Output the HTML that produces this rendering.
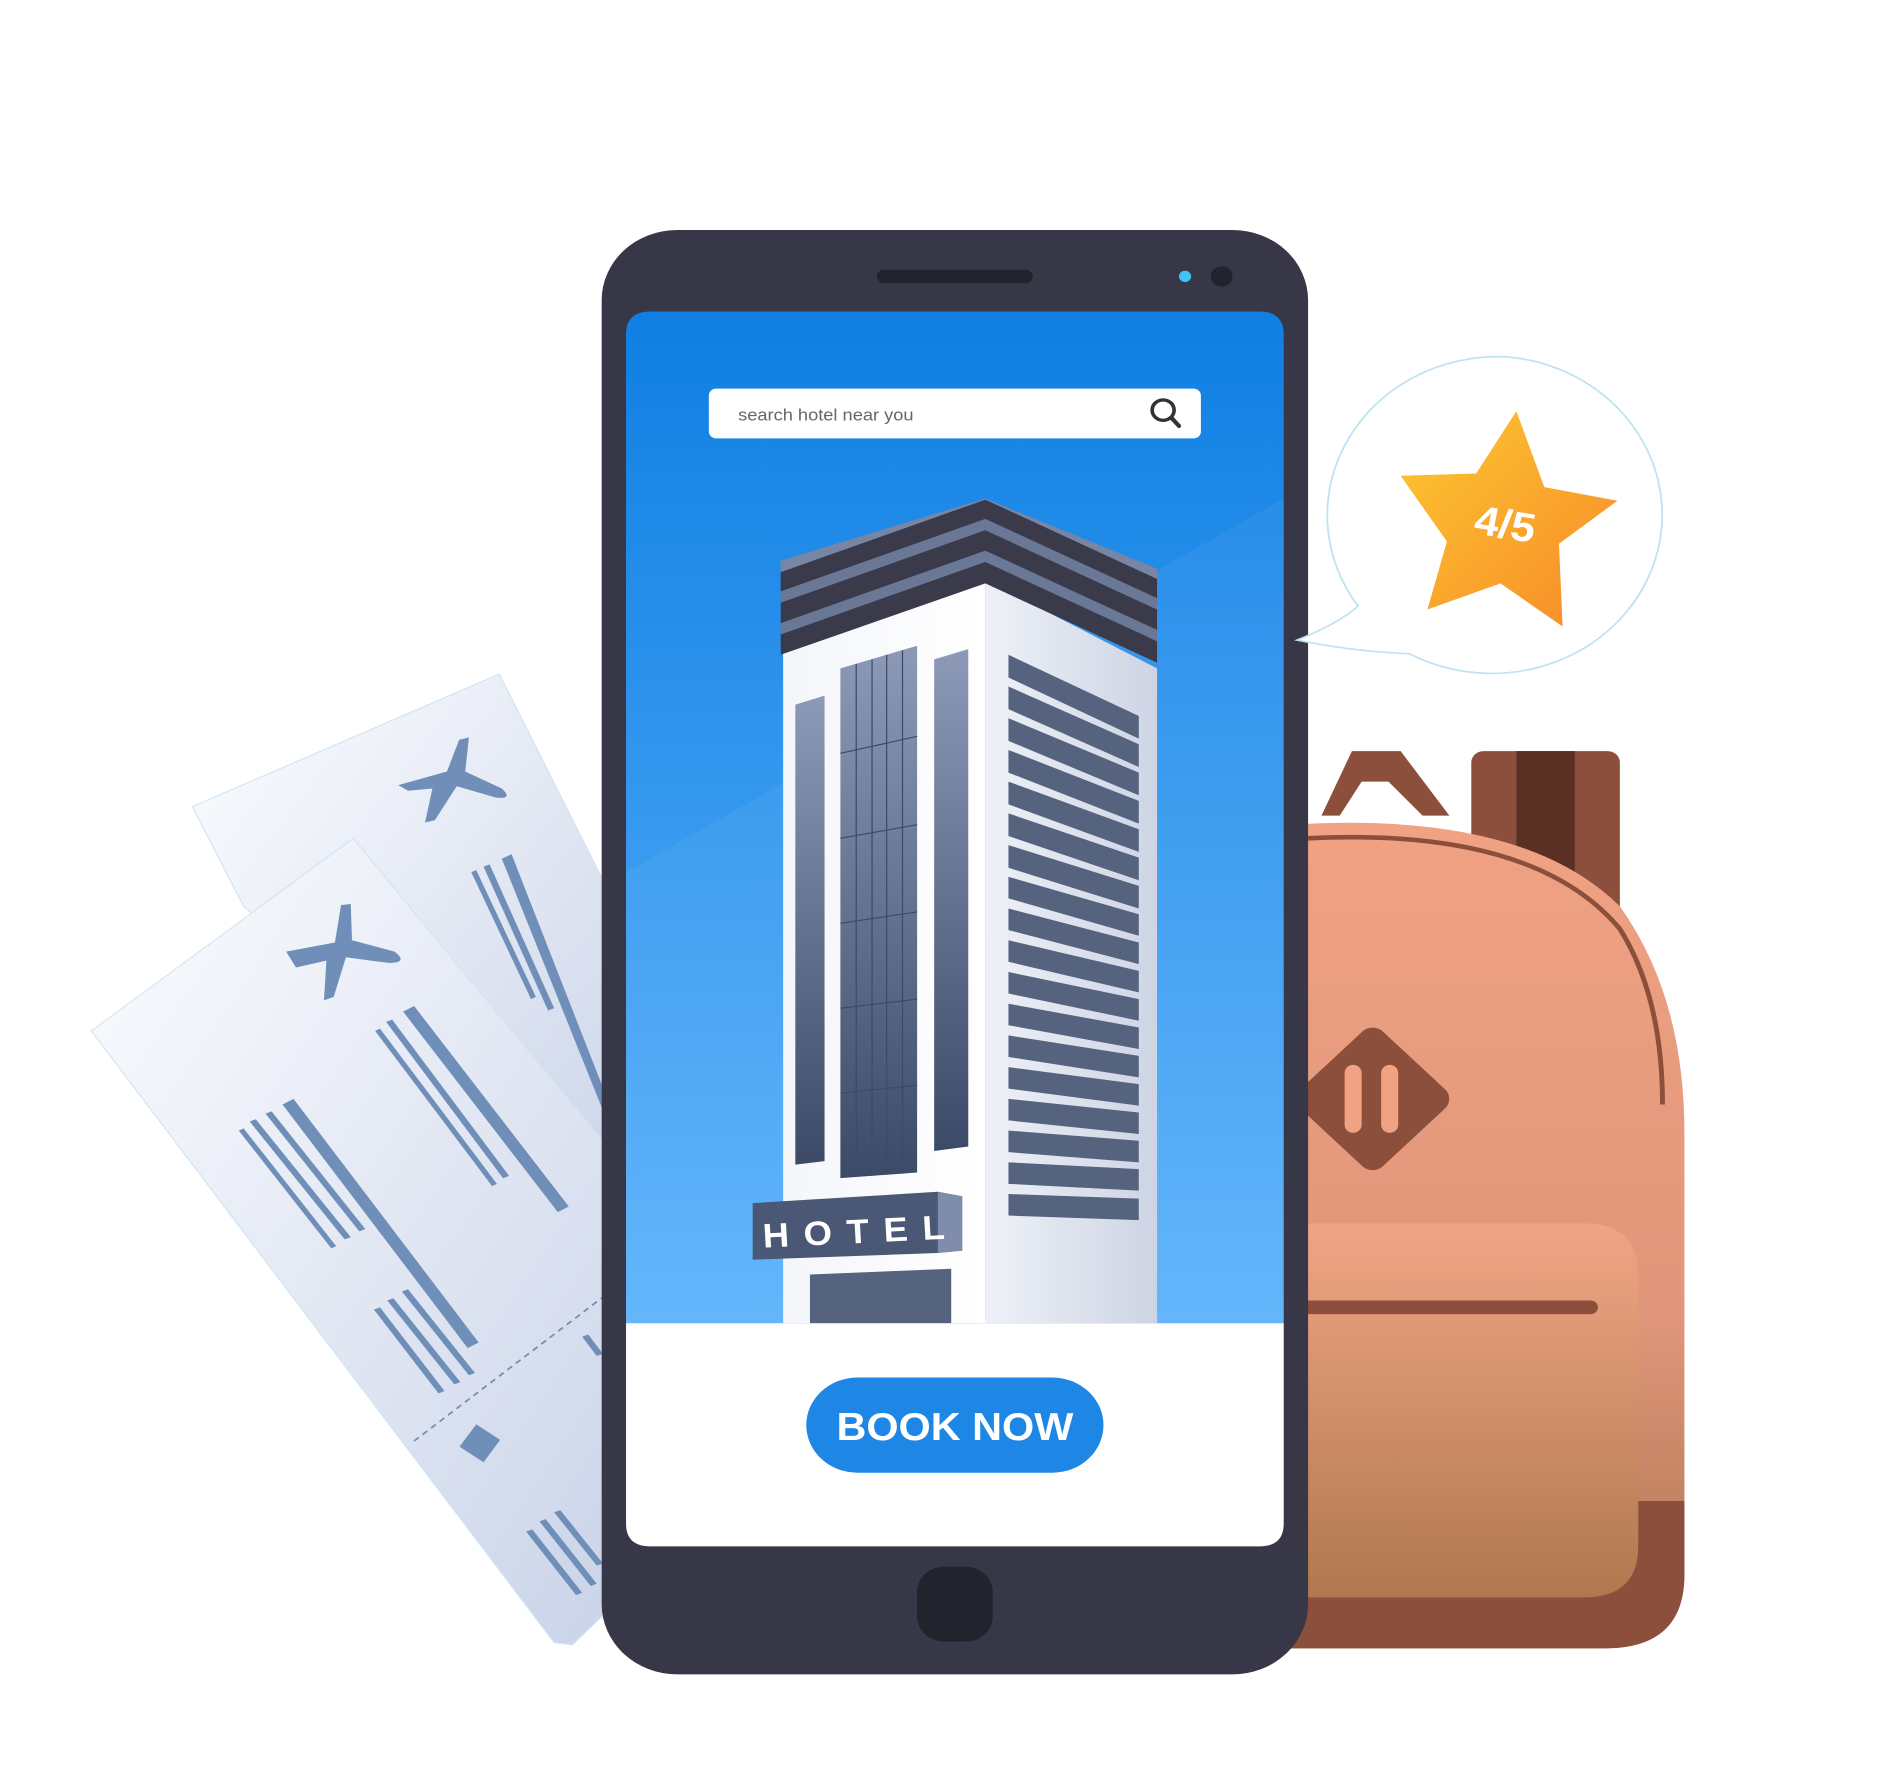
<!DOCTYPE html>
<html><head><meta charset="utf-8"><style>
html,body{margin:0;padding:0;background:#fff;width:1900px;height:1765px;overflow:hidden}
svg{display:block}
</style></head><body>
<svg width="1900" height="1765" viewBox="0 0 1560 1558" preserveAspectRatio="none" xmlns="http://www.w3.org/2000/svg">
<defs>
<linearGradient id="scr" x1="0" y1="0" x2="0" y2="1"><stop offset="0" stop-color="#0f7fe3"/><stop offset="1" stop-color="#5cb2fb"/></linearGradient>
<linearGradient id="tk" x1="0" y1="0" x2="1" y2="1"><stop offset="0" stop-color="#fdfdff"/><stop offset="1" stop-color="#c9d3e8"/></linearGradient>
<linearGradient id="bp" x1="0" y1="0" x2="0" y2="1"><stop offset="0" stop-color="#f0a283"/><stop offset="0.6" stop-color="#e0967a"/><stop offset="1" stop-color="#ac7450"/></linearGradient>
<linearGradient id="pk" x1="0" y1="0" x2="0" y2="1"><stop offset="0" stop-color="#f0a585"/><stop offset="1" stop-color="#b0784f"/></linearGradient>
<linearGradient id="st" x1="0" y1="0" x2="1" y2="1"><stop offset="0" stop-color="#fdc830"/><stop offset="1" stop-color="#f7892a"/></linearGradient>
<linearGradient id="win" x1="0" y1="0" x2="0" y2="1"><stop offset="0" stop-color="#8c9ab8"/><stop offset="1" stop-color="#3c4a68"/></linearGradient>
<linearGradient id="rf" x1="0" y1="0" x2="1" y2="0"><stop offset="0" stop-color="#eef1f7"/><stop offset="1" stop-color="#cdd4e4"/></linearGradient>
<linearGradient id="lf" x1="0" y1="0" x2="1" y2="0"><stop offset="0" stop-color="#f4f6fa"/><stop offset="1" stop-color="#ffffff"/></linearGradient>
</defs>
<!-- tickets -->
<polygon points="158,712 410,595 520,830 520,1100 200,800" fill="url(#tk)" stroke="#cfe6f3" stroke-width="1"/>
<g fill="#6f8fb8">
<path d="M327,693 l40,-12 l10,-28 l8,-2 l-3,30 l30,15 q10,10 -5,8 l-32,-10 l-18,30 l-8,2 l6,-30 l-20,2 z"/>
<polygon points="412,758 420,754 495,960 495,980"/>
<polygon points="397,765 402,763 455,890 450,892"/>
<polygon points="387,770 391,768 440,880 436,882"/>
</g>
<polygon points="75,910 290,740 520,1040 520,1400 470,1452 455,1450" fill="url(#tk)" stroke="#cfe6f3" stroke-width="1"/>
<g fill="#6f8fb8">
<path d="M235,840 l40,-8 l5,-33 l8,-1 l1,32 l35,10 q12,10 -5,10 l-35,-5 l-10,35 l-8,3 l2,-35 l-25,6 z"/>
<polygon points="331,893 340,888 467,1065 458,1070"/>
<polygon points="317,902 322,900 418,1038 413,1040"/>
<polygon points="308,910 312,908 408,1045 404,1047"/>
<polygon points="232,975 241,970 393,1185 384,1190"/>
<polygon points="218,983 223,981 300,1085 295,1087"/>
<polygon points="205,990 210,988 288,1092 283,1094"/>
<polygon points="196,998 200,996 276,1100 272,1102"/>
<polygon points="330,1140 335,1138 390,1212 385,1214"/>
<polygon points="318,1148 323,1146 378,1220 373,1222"/>
<polygon points="307,1156 312,1154 365,1228 360,1230"/>
<polygon points="455,1335 460,1333 495,1380 490,1382"/>
<polygon points="443,1343 448,1341 490,1398 485,1400"/>
<polygon points="432,1352 437,1350 478,1406 473,1408"/>
<polygon points="478,1180 483,1178 495,1195 490,1197"/>
<rect x="382" y="1262" width="24" height="24" transform="rotate(35 394 1274)"/>
</g>
<line x1="340" y1="1272" x2="495" y2="1145" stroke="#6f8fb8" stroke-width="1.5" stroke-dasharray="5,4"/>
<!-- backpack -->
<path d="M1085,720 L1110,663 L1150,663 L1190,720 L1168,720 L1140,690 L1118,690 L1100,720Z" fill="#8b4f3c"/>
<rect x="1208" y="663" width="122" height="160" rx="10" fill="#8b4f3c"/>
<rect x="1245" y="663" width="48" height="160" fill="#5a3024"/>
<path d="M1060,728 Q1250,715 1330,800 Q1383,880 1383,1000 L1383,1390 Q1383,1455 1318,1455 L1060,1455Z" fill="url(#bp)"/>
<path d="M1345,1325 L1383,1325 L1383,1390 Q1383,1455 1318,1455 L1060,1455 L1060,1410 L1300,1410 Q1345,1410 1345,1365Z" fill="#8b4f3c"/>
<path d="M1074,740 Q1260,730 1330,820 Q1365,880 1365,975" fill="none" stroke="#8b4f3c" stroke-width="4"/>
<path d="M1060,1080 L1300,1080 Q1345,1080 1345,1125 L1345,1365 Q1345,1410 1300,1410 L1060,1410Z" fill="url(#pk)"/>
<rect x="1060" y="1148" width="252" height="12" rx="6" fill="#8b4f3c"/>
<rect x="1079" y="922" width="96" height="96" rx="12" transform="rotate(45 1127 970)" fill="#8b4f3c"/>
<rect x="1104" y="940" width="14" height="60" rx="7" fill="#f0a283"/>
<rect x="1134" y="940" width="14" height="60" rx="7" fill="#f0a283"/>
<!-- phone -->
<rect x="494" y="203" width="580" height="1275" rx="62" fill="#373747"/>
<rect x="720" y="238" width="128" height="12" rx="6" fill="#23232e"/>
<circle cx="973" cy="244" r="5" fill="#3ec3f2"/>
<circle cx="1003" cy="244" r="9" fill="#23232e"/>
<rect x="753" y="1383" width="62" height="66" rx="22" fill="#23232e"/>
<path d="M514,295 Q514,275 534,275 L1034,275 Q1054,275 1054,295 L1054,1168 L514,1168Z" fill="url(#scr)"/>
<polygon points="514,770 1054,440 1054,1168 514,1168" fill="#ffffff" opacity="0.05"/>
<path d="M514,1168 L1054,1168 L1054,1345 Q1054,1365 1034,1365 L534,1365 Q514,1365 514,1345Z" fill="#fff"/>
<rect x="582" y="343" width="404" height="44" rx="6" fill="#fff"/>
<text x="606" y="371" font-family="Liberation Sans, sans-serif" font-size="15" fill="#666">search hotel near you</text>
<circle cx="955" cy="362" r="9" fill="none" stroke="#333" stroke-width="3"/>
<line x1="962" y1="369" x2="968" y2="376" stroke="#333" stroke-width="3.5" stroke-linecap="round"/>
<!-- building -->
<polygon points="643,576 809,512 809,1168 643,1168" fill="url(#lf)"/>
<polygon points="809,512 950,590 950,1168 809,1168" fill="url(#rf)"/>
<g>
<polygon points="641,560 809,496 950,566 950,585 809,515 641,578" fill="#3a3a4a"/>
<polygon points="641,550 809,486 950,556 950,566 809,496 641,560" fill="#6a7896"/>
<polygon points="641,532 809,468 950,538 950,556 809,486 641,550" fill="#3a3a4a"/>
<polygon points="641,522 809,458 950,528 950,538 809,468 641,532" fill="#6a7896"/>
<polygon points="641,505 809,441 950,511 950,528 809,458 641,522" fill="#3a3a4a"/>
<polygon points="641,495 809,440 950,502 950,511 809,441 641,505" fill="#7986a3"/>
</g>
<polygon points="653,622 677,614 677,1025 653,1028" fill="url(#win)"/>
<polygon points="690,590 753,570 753,1035 690,1040" fill="url(#win)"/>
<g stroke="#3c4a68" stroke-width="1"><line x1="703" y1="586" x2="703" y2="1039"/><line x1="716" y1="582" x2="716" y2="1038"/><line x1="728" y1="578" x2="728" y2="1037"/><line x1="741" y1="574" x2="741" y2="1036"/><line x1="690" y1="665" x2="753" y2="650"/><line x1="690" y1="740" x2="753" y2="728"/><line x1="690" y1="815" x2="753" y2="805"/><line x1="690" y1="890" x2="753" y2="882"/><line x1="690" y1="965" x2="753" y2="958"/></g>
<polygon points="767,582 795,573 795,1012 767,1016" fill="url(#win)"/>
<g fill="#56637f">
<polygon points="828,578 935,632 935,652 828,598"/>
<polygon points="828,606 935,657 935,677 828,626"/>
<polygon points="828,634 935,682 935,702 828,654"/>
<polygon points="828,662 935,707 935,727 828,682"/>
<polygon points="828,690 935,732 935,752 828,710"/>
<polygon points="828,718 935,757 935,777 828,738"/>
<polygon points="828,746 935,782 935,802 828,766"/>
<polygon points="828,774 935,807 935,826 828,793"/>
<polygon points="828,802 935,832 935,851 828,821"/>
<polygon points="828,830 935,857 935,876 828,849"/>
<polygon points="828,858 935,882 935,901 828,877"/>
<polygon points="828,886 935,907 935,926 828,905"/>
<polygon points="828,914 935,932 935,951 828,933"/>
<polygon points="828,942 935,957 935,976 828,961"/>
<polygon points="828,970 935,982 935,1001 828,989"/>
<polygon points="828,998 935,1007 935,1026 828,1017"/>
<polygon points="828,1026 935,1032 935,1051 828,1045"/>
<polygon points="828,1054 935,1058 935,1077 828,1073"/>
</g>
<polygon points="665,1125 781,1120 781,1168 665,1168" fill="#56637f"/>
<polygon points="618,1062 770,1052 790,1056 790,1104 770,1106 618,1112" fill="#4a5775"/>
<polygon points="770,1052 790,1056 790,1104 770,1106" fill="#7f8cab"/>
<text x="626" y="1098" font-family="Liberation Sans, sans-serif" font-weight="bold" font-size="30" fill="#fff" letter-spacing="12" transform="rotate(-3 690 1085)">HOTEL</text>
<!-- button -->
<rect x="662" y="1216" width="244" height="84" rx="42" fill="#1e86e4"/>
<text x="784" y="1271" text-anchor="middle" font-family="Liberation Sans, sans-serif" font-weight="bold" font-size="34" fill="#fff">BOOK NOW</text>
<!-- bubble -->
<path d="M1237,315 A140,140 0 1 1 1157,577 Q1110,575 1065,565 Q1100,550 1115,535 A140,140 0 0 1 1237,315Z" fill="#fff" stroke="#bfe3f0" stroke-width="1.5"/>
<polygon points="1245,363 1268,430 1328,442 1280,480 1283,553 1232,515 1172,538 1188,478 1150,420 1212,418" fill="url(#st)"/>
<text x="1236" y="475" text-anchor="middle" font-family="Liberation Sans, sans-serif" font-weight="bold" font-size="36" fill="#fff" transform="rotate(10 1236 462)">4/5</text>
</svg>
</body></html>
